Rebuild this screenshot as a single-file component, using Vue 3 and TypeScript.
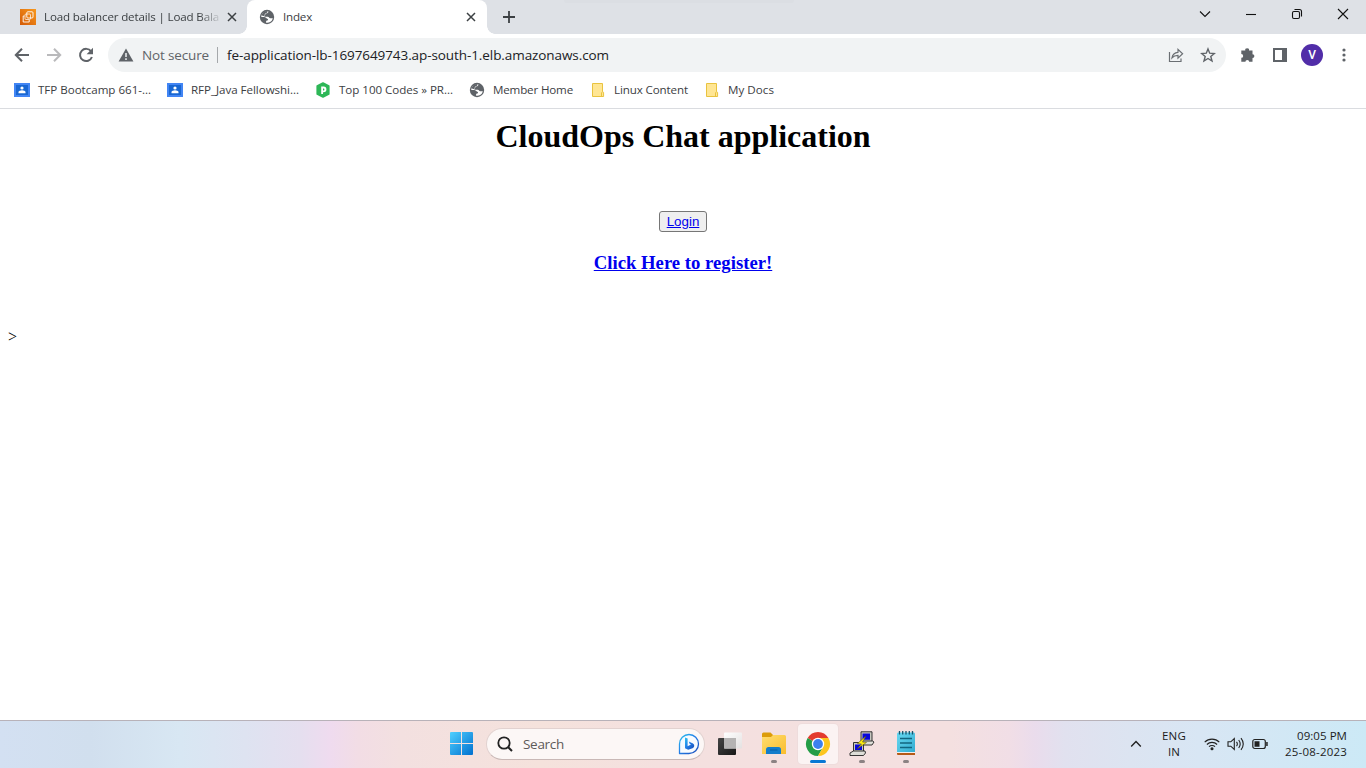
<script setup lang="ts">
import type { Directive } from 'vue'

interface Bookmark {
  label: string
  icon: 'class' | 'prep' | 'globe' | 'folder'
  width: number
  gap: number
}

const bookmarks: Bookmark[] = [
  { label: 'TFP Bootcamp 661-...', icon: 'class', width: 113, gap: 16 },
  { label: 'RFP_Java Fellowshi...', icon: 'class', width: 108, gap: 16 },
  { label: 'Top 100 Codes » PR...', icon: 'prep', width: 114, gap: 16 },
  { label: 'Member Home', icon: 'globe', width: 80, gap: 17 },
  { label: 'Linux Content', icon: 'folder', width: 74, gap: 16 },
  { label: 'My Docs', icon: 'folder', width: 46, gap: 0 },
]

// Spreads a label's letters so that it fills the given width.
const vFit: Directive<HTMLElement, number> = {
  mounted(el, { value }) {
    const natural = el.getBoundingClientRect().width
    const count = (el.textContent ?? '').length
    el.style.letterSpacing = `${(value - natural) / count}px`
  },
}
</script>

<template>
  <div class="screen">
    <svg class="defs" width="0" height="0" aria-hidden="true">
      <symbol id="globe" viewBox="0 0 16 16">
        <circle cx="8" cy="8" r="7.200" fill="#5f6368" />
        <path d="M9.300 2.300C9.600 4 8.500 4.400 7 4.600c-.8.200-.4 1.400-1.200 1.800-.9.400-.4 1.300.4 1.300h2.600c1.300 0 1.200 1.500 2.400 1.500h2.600c-.3 1.500-1.200 3-2.700 3.900-1.200.6-2.700.9-4 .6v-1.300c0-.8.600-.9 1.400-1 .8-.2.700-1.300-.2-1.600-1.300-.4-1.600-1.600-3-1.700L2.300 7.900C2.300 4.300 5.600 1.700 9.300 2.300Z" fill="#fff" />
        <path d="M2.300 6.200 4.300 7l1.200-.3.400-2L8.300 3.500l.2-1.500L5 2.300z" fill="#5f6368" />
      </symbol>
      <symbol id="class" viewBox="0 0 16 14">
        <path d="M0 0h16v14H0z" fill="#4285f4" />
        <path d="M2 2h12v10H2z" fill="#1967d2" />
        <circle cx="8" cy="5" r="1.6" fill="#fff" />
        <path d="M4.500 10.200V9c0-1 2-1.700 3.500-1.700s3.500.7 3.500 1.700v1.200z" fill="#fff" />
      </symbol>
      <symbol id="prep" viewBox="0 0 16 16">
        <path d="m8 1 5.800 3v8L8 15l-5.800-3V4z" fill="#2db757" stroke="#2db757" stroke-width="1.600" stroke-linejoin="round" />
        <path d="M6.200 12V4.600h2.400a2.800 2.800 0 0 1 0 5.600H8V12z" fill="#fff" />
        <path d="M8 6.600v1.800h.5a.9.9 0 0 0 0-1.800z" fill="#2db757" />
      </symbol>
      <symbol id="folder" viewBox="0 0 16 16">
        <path d="M2.500 1.500h10v8.200l1.100.7v4.100H2.500z" fill="#ffe694" stroke="#e9c33f" />
        <path d="M11.500 14.500v-3.600l1-1.200" fill="none" stroke="#e9c33f" />
      </symbol>
    </svg>

    <header class="tabs">
      <div class="tab back-tab">
        <svg class="favicon" width="16" height="16" viewBox="0 0 16 16">
          <defs><linearGradient id="aws" x1="0" y1="1" x2="1" y2="0"><stop stop-color="#d45b07" /><stop offset="1" stop-color="#f8981d" /></linearGradient></defs>
          <path d="M0 0h16v16H0z" fill="url(#aws)" />
          <g fill="none" stroke="#fff" stroke-width=".9"><rect x="6.800" y="2.800" width="6.200" height="6.200" rx="1" /><rect x="5" y="5" width="5.500" height="5.500" rx="1" opacity=".8" /><path d="M4.500 7H3.200v6h6v-2" /></g>
        </svg>
        <div class="tab-clip"><span v-fit="175">Load balancer details | Load Bala</span></div>
        <svg class="close" width="10" height="10" viewBox="0 0 10 10"><path d="m1 1 8 8M9 1 1 9" /></svg>
      </div>
      <div class="tab active">
        <svg class="favicon" width="16" height="16"><use href="#globe" /></svg>
        <span v-fit="29">Index</span>
        <svg class="close" width="10" height="10" viewBox="0 0 10 10"><path d="m1 1 8 8M9 1 1 9" /></svg>
      </div>
      <div class="curve"></div>
      <svg class="plus" width="12" height="12" viewBox="0 0 12 12"><path d="M6 0v12M0 6h12" stroke="#3c4043" stroke-width="1.800" /></svg>
      <div class="ghost"></div>
      <div class="window-buttons">
        <svg width="12" height="12" viewBox="0 0 12 12"><path d="m1 3.500 5 5 5-5" /></svg>
        <svg width="12" height="12" viewBox="0 0 12 12"><path d="M1 6.500h10" /></svg>
        <svg width="12" height="12" viewBox="0 0 12 12"><rect x="1.500" y="3.500" width="7" height="7" rx="1.400" /><path d="M3.500 1.500h5a2 2 0 0 1 2 2v5" /></svg>
        <svg width="12" height="12" viewBox="0 0 12 12"><path d="m1 1 10 10M11 1 1 11" /></svg>
      </div>
    </header>

    <nav class="toolbar">
      <svg class="nav" width="16" height="16" viewBox="0 0 16 16"><path d="M15 8H2M8 1.800 1.800 8 8 14.200" stroke="#5f6368" /></svg>
      <svg class="nav" width="16" height="16" viewBox="0 0 16 16"><path d="M1 8h13M8 1.800 14.200 8 8 14.200" stroke="#bababc" /></svg>
      <svg class="nav" width="16" height="16" viewBox="0 0 16 16"><path d="M13.100 4.400A6.100 6.100 0 1 0 13.900 10" stroke="#5f6368" /><path d="M15 .8v6.400H8.600z" fill="#5f6368" stroke="none" /></svg>
      <div class="address">
        <svg width="16" height="14" viewBox="0 0 16 14"><path d="M8 .6 15.400 13.400H.6z" fill="#5f6368" /><path d="M8 5v4M8 10.300v1.600" stroke="#f1f3f4" stroke-width="1.500" /></svg>
        <span class="secure" v-fit="67">Not secure</span>
        <i class="bar"></i>
        <span class="url" v-fit="382">fe-application-lb-1697649743.ap-south-1.elb.amazonaws.com</span>
        <svg class="share" width="16" height="16" viewBox="0 0 16 16"><path d="M1.500 5v9.500H13v-3M4 10.800c.6-3.800 2.500-5.300 6-5.500V2.400l4.600 4.400L10 11.200V8.400c-2.800 0-4.500.7-6 2.400z" fill="none" stroke="#6b6f73" stroke-width="1.200" /></svg>
        <svg class="star" width="16" height="16" viewBox="0 0 16 16"><path d="m8 1.900 1.700 4.300 4.600.3-3.500 3 1.200 4.500L8 11.500 4 14l1.200-4.500-3.500-3 4.600-.3z" fill="none" stroke="#5f6368" stroke-width="1.400" /></svg>
      </div>
      <svg class="puzzle" width="16" height="16" viewBox="0 0 16 16"><path d="M2 3.500h3.300a1.900 1.900 0 1 1 3.700 0h3.500v3.700a1.900 1.900 0 1 1 0 3.800v3.800H9.200a1.900 1.900 0 0 0-3.800 0H1.300v-4a1.900 1.900 0 0 0 0-3.800V3.500z" fill="#5f6368" /></svg>
      <svg class="panel" width="14" height="14" viewBox="0 0 14 14"><path d="M0 0h14v14H0zM2 2v10h7V2z" fill="#5f6368" fill-rule="evenodd" /></svg>
      <div class="avatar">V</div>
      <svg class="dots" width="4" height="14" viewBox="0 0 4 14" fill="#5f6368"><circle cx="2" cy="2" r="1.600" /><circle cx="2" cy="7" r="1.600" /><circle cx="2" cy="12" r="1.600" /></svg>
    </nav>

    <div class="bookmarks">
      <div v-for="b in bookmarks" :key="b.label" class="bookmark" :style="{ marginRight: b.gap + 'px' }">
        <svg width="16" height="16"><use :href="'#' + b.icon" width="16" height="16" /></svg>
        <div class="bm-label" :style="{ width: b.width + 'px' }"><span v-fit="b.width">{{ b.label }}</span></div>
      </div>
    </div>

    <main class="page">
      <h1>CloudOps Chat application</h1>
      <button type="button"><a href="#">Login</a></button>
      <h3><a href="#">Click Here to register!</a></h3>
      <p>&gt;</p>
    </main>

    <footer class="taskbar">
      <svg class="start" width="24" height="24" viewBox="0 0 24 24">
        <defs><linearGradient id="win" x1="0" y1="0" x2="1" y2="1"><stop stop-color="#4fd0ff" /><stop offset="1" stop-color="#0070cf" /></linearGradient></defs>
        <path d="M1 0h10v11H0V1Q0 0 1 0ZM12 0h10q1 0 1 1v10H12ZM0 12h11v11H1q-1 0-1-1ZM12 12h11v10q0 1-1 1H12Z" fill="url(#win)" />
      </svg>
      <div class="search">
        <svg width="16" height="16" viewBox="0 0 16 16"><circle cx="7" cy="7" r="5.700" fill="none" stroke="#222" stroke-width="1.800" /><path d="m11 11 4 4" stroke="#222" stroke-width="2" /></svg>
        <span v-fit="41">Search</span>
        <svg class="bing" width="22" height="22" viewBox="0 0 22 22">
          <defs><linearGradient id="bing" x1="0" y1="0" x2="1" y2="1"><stop stop-color="#2bc3ef" /><stop offset=".45" stop-color="#2580e8" /><stop offset="1" stop-color="#174ab7" /></linearGradient></defs>
          <path d="M1.500 20.500V11a9.500 9.500 0 1 1 9.500 9.500z" fill="#f7fbff" stroke="url(#bing)" stroke-width="1.300" stroke-linejoin="round" />
          <path d="m7 4.500 2.600 1v7.800L13 11.500l-1.400-.7-.8-2.300 4.200 2c2.300 1.500 1.100 4.700-1.200 5l-3.600 1.200L7 15.200z" fill="url(#bing)" />
        </svg>
      </div>

      <div class="apps">
        <div class="app">
          <svg width="26" height="26" viewBox="0 0 26 26"><defs><linearGradient id="dark" x1="0" y1="0" x2="1" y2="1"><stop stop-color="#444" /><stop offset="1" stop-color="#171717" /></linearGradient><linearGradient id="light" x1="0" y1="0" x2="1" y2="1"><stop stop-color="#fff" /><stop offset="1" stop-color="#e4e1e1" /></linearGradient></defs><rect x="1" y="7" width="18" height="17" rx="1" fill="url(#dark)" /><rect x="7" y="1.500" width="18" height="16" rx="1" fill="url(#light)" /><path d="M7 7h12v10.500H7z" fill="#b5b3b3" /></svg>
        </div>
        <div class="app">
          <svg width="26" height="26" viewBox="0 0 26 26"><defs><linearGradient id="fold" x1="0" y1="0" x2="1" y2="1"><stop stop-color="#ffdd70" /><stop offset="1" stop-color="#f9bd2d" /></linearGradient></defs><path d="M1 3q0-1.500 1.500-1.500h7L12 4v4H1z" fill="#dc9c0a" /><path d="M1 6h9l2-2h11.500Q25 4 25 5.500V23H1z" fill="url(#fold)" /><path d="M5 23v-4.500q0-2.500 2.500-2.500h10q2.500 0 2.500 2.500V23z" fill="#137dcb" /><path d="M9 19h7.500" stroke="#075fa5" /></svg>
          <i class="run"></i>
        </div>
        <div class="app current">
          <svg width="26" height="26" viewBox="0 0 26 26"><path d="M13 13 2.600 7A12 12 0 0 1 23.400 7z" fill="#e33b2e" /><path d="M13 13 2.600 7A12 12 0 0 0 13 25l5.200-9z" fill="#249d47" /><path d="M13 7h10.400A12 12 0 0 1 13 25l5.200-9z" fill="#fcc51d" /><circle cx="13" cy="13" r="6.200" fill="#fff" /><circle cx="13" cy="13" r="4.900" fill="#3c80ed" /></svg>
          <i class="run wide"></i>
        </div>
        <div class="app">
          <svg width="26" height="26" viewBox="0 0 26 26">
            <g stroke="#222" stroke-width=".9"><path d="M12 .8h11v10H12z" fill="#c8c8c0" /><path d="m11 10.800 2-.8h10.500l1.500 1-2 3H11z" fill="#deded8" /><path d="M4.500 11.500h10v9.500h-10z" fill="#c8c8c0" /><path d="m1 22 3.500-2H16l.5 2-2 2.500H1z" fill="#deded8" /></g>
            <path d="M13.500 2.500h7.500v6.300h-7.500zM6 13.500h7v5.500H6z" fill="#0806dc" />
            <path d="m17 5-8.500 7.500 4 .5-4.500 5 9.500-6.500-4-.5z" fill="#ffed14" stroke="#504a00" stroke-width=".5" />
          </svg>
          <i class="run"></i>
        </div>
        <div class="app">
          <svg width="26" height="26" viewBox="0 0 26 26"><defs><linearGradient id="note" x1="0" y1="0" x2="1" y2="1"><stop stop-color="#69d9f1" /><stop offset="1" stop-color="#32acd1" /></linearGradient></defs><path d="M4 21h18v3H5q-1 0-1-1z" fill="#b65a16" /><path d="M4 21h18v1H4z" fill="#eee" /><path d="M4 3q0-1.500 1-1.500h16q1 0 1 1.500v18H4z" fill="url(#note)" /><path d="M6.500 0v3.500M9.700 0v3.500M13 0v3.500M16.300 0v3.500M19.500 0v3.500" stroke="#17546d" stroke-width="1.300" /><path d="M7 7.500h12M7 12h12M7 16.500h12" stroke="#126580" stroke-width="1.500" /></svg>
          <i class="run"></i>
        </div>
      </div>

      <div class="tray">
        <svg class="chev" width="12" height="8" viewBox="0 0 12 8"><path d="m1.200 6.500 4.800-5 4.800 5" fill="none" stroke="#222" stroke-width="1.400" /></svg>
        <div class="lang"><span v-fit="24">ENG</span><span v-fit="12">IN</span></div>
        <svg class="wifi" width="16" height="14" viewBox="0 0 16 14" fill="none" stroke="#222" stroke-width="1.100"><path d="M.7 5.200a10.300 10.300 0 0 1 14.600 0M2.900 7.500a7.200 7.200 0 0 1 10.200 0M5 9.700a4.200 4.200 0 0 1 6 0" /><circle cx="8" cy="11.800" r="1" fill="#222" /></svg>
        <svg class="sound" width="18" height="14" viewBox="0 0 18 14" fill="none" stroke="#222" stroke-width="1.100"><path d="M1 4.800h2.800L7.300 1.500v11L3.800 9.200H1zM9.500 4.800q1.700 2.200 0 4.400M11.700 3q3 4 0 8M14 1.200q4.500 5.800 0 11.600" /></svg>
        <svg class="battery" width="17" height="12" viewBox="0 0 17 12"><rect x=".8" y="1.500" width="12.500" height="9" rx="2" fill="none" stroke="#222" stroke-width="1.200" /><path d="M2.500 3.200h5v5.600h-5zM14.200 4h1.500v4h-1.500z" fill="#222" /></svg>
        <div class="clock"><span v-fit="50">09:05 PM</span><span v-fit="62">25-08-2023</span></div>
      </div>
    </footer>
  </div>
</template>

<style>
html, body { overflow: hidden; background: #fff; }
</style>

<style scoped>
* { box-sizing: border-box; }
svg { flex: none; display: block; }
span { white-space: nowrap; display: inline-block; flex: none; }
.defs { position: absolute; }
.screen { width: 1366px; height: 768px; display: flex; flex-direction: column; background: #fff; font-family: "Open Sans", "Noto Sans", sans-serif; font-size: 11.6px; color: #3c4043; }
.tabs { height: 34px; display: flex; align-items: flex-start; background: #dee1e6; flex: none; }
.tab { display: flex; align-items: center; height: 34px; flex: none; line-height: 16px; }
.back-tab { width: 247px; padding-left: 20px; background: radial-gradient(circle at 0 0, #dee1e6 7.500px, #fff 8px) right bottom / 8px 8px no-repeat; }
.tab-clip { width: 176px; margin-left: 8px; overflow: hidden; mask-image: linear-gradient(90deg, #000 88%, rgba(0, 0, 0, .1) 100%); }
.close { stroke: #3c4043; stroke-width: 1.5; }
.back-tab .close { margin-left: 7px; }
.active { width: 240px; padding: 0 11px 0 12px; background: #fff; border-radius: 8px 8px 0 0; }
.active span { margin-left: 8px; }
.active .close { margin-left: auto; }
.curve { width: 8px; height: 8px; align-self: flex-end; background: radial-gradient(circle at 100% 0, #dee1e6 7.500px, #fff 8px); }
.plus { margin: 11px 0 0 8px; }
.ghost { width: 230px; height: 3px; margin-left: 49px; background: #d9dce1; border-radius: 0 0 6px 6px; opacity: .6; }
.window-buttons { display: flex; gap: 34px; margin: 8px 17px 0 auto; fill: none; stroke: #111; stroke-width: 1.1; }
.toolbar { height: 42px; display: flex; align-items: center; flex: none; padding-left: 14px; }
.nav { fill: none; stroke-width: 2; margin-right: 16px; }
.address { width: 1118px; height: 34px; margin-left: -2px; border-radius: 17px; background: #f1f3f4; display: flex; align-items: center; padding-left: 10px; font-size: 13.5px; }
.secure { color: #5f6368; margin-left: 8px; }
.bar { width: 1px; height: 16px; background: #a5a8ab; margin: 0 9px 0 8px; }
.url { color: #202124; }
.share { margin-left: auto; }
.star { margin: 0 10px 0 16px; }
.puzzle { margin-left: 14px; }
.panel { margin-left: 17px; }
.avatar { width: 22px; height: 22px; margin-left: 14px; border-radius: 50%; background: #512da8; color: #fff; font: 500 12px/22px Roboto, sans-serif; text-align: center; flex: none; }
.dots { margin-left: 19px; }
.bookmarks { height: 33px; display: flex; align-items: center; flex: none; padding: 0 0 5px 14px; border-bottom: 1px solid #dadce0; }
.bookmark { display: flex; align-items: center; gap: 8px; line-height: 16px; }
.page { flex: 1; padding: 8px; display: flex; flex-direction: column; align-items: center; font: 16px "Liberation Serif", serif; color: #000; }
h1 { margin: 0; font-size: 32px; line-height: 38px; }
button { width: 48px; height: 21px; margin: 56px 0 20px; padding: 0; background: #efefef; border: 1px solid #767676; border-radius: 3px; font: 13.333px/17px "Liberation Sans", Arial, sans-serif; }
a { color: #0000ee; text-decoration: underline; }
h3 { margin: 0; font-size: 18.72px; line-height: 22px; }
p { align-self: flex-start; margin: 54px 0 0; line-height: 18px; }
.taskbar { height: 48px; flex: none; display: flex; align-items: center; padding-bottom: 1px; border-top: 1px solid #b8b2b9; color: #1c1c1c; background: linear-gradient(90deg, #d3e0f2 0, #d1dfee 90px, #d8e7f3 180px, #dee3f1 245px, #e5dfef 300px, #efdbef 330px, #f2dde5 358px, #f3e0e0 400px, #f5e2dc 540px, #f4e0df 660px, #f4e0e0 950px, #f1dee6 1010px, #eadcec 1035px, #e1e1ef 1065px, #dce4f1 1130px, #d8e6f4 1200px, #cce9f6 1366px); }
.start { margin-left: 450px; }
.search { width: 219px; height: 32px; margin-left: 12px; border-radius: 16px; background: #fcf7f6; border: 1px solid #e2d2d0; border-bottom-color: #c9b8b6; display: flex; align-items: center; padding: 0 4px 0 10px; font-size: 13.5px; color: #5e5a59; }
.search span { margin-left: 10px; }
.bing { margin-left: auto; }
.apps { display: flex; margin-left: 5px; gap: 4px; }
.app { width: 40px; height: 40px; padding-top: 7px; display: flex; flex-direction: column; align-items: center; border-radius: 4px; }
.current { background: #fbf3f3; box-shadow: 0 0 0 1px #eedcdc; }
.run { width: 6px; height: 3px; margin-top: 3px; border-radius: 2px; background: #8b8283; flex: none; }
.wide { width: 16px; background: #0778d4; }
.tray { display: flex; align-items: center; margin-left: auto; padding-right: 19px; }
.lang { width: 26px; margin-left: 19px; display: flex; flex-direction: column; align-items: center; line-height: 16px; font-size: 11.5px; }
.wifi { margin-left: 17px; }
.sound { margin-left: 7px; }
.battery { margin-left: 7px; }
.clock { width: 64px; margin-left: 14px; display: flex; flex-direction: column; align-items: flex-end; line-height: 16px; font-size: 11.5px; }
</style>
